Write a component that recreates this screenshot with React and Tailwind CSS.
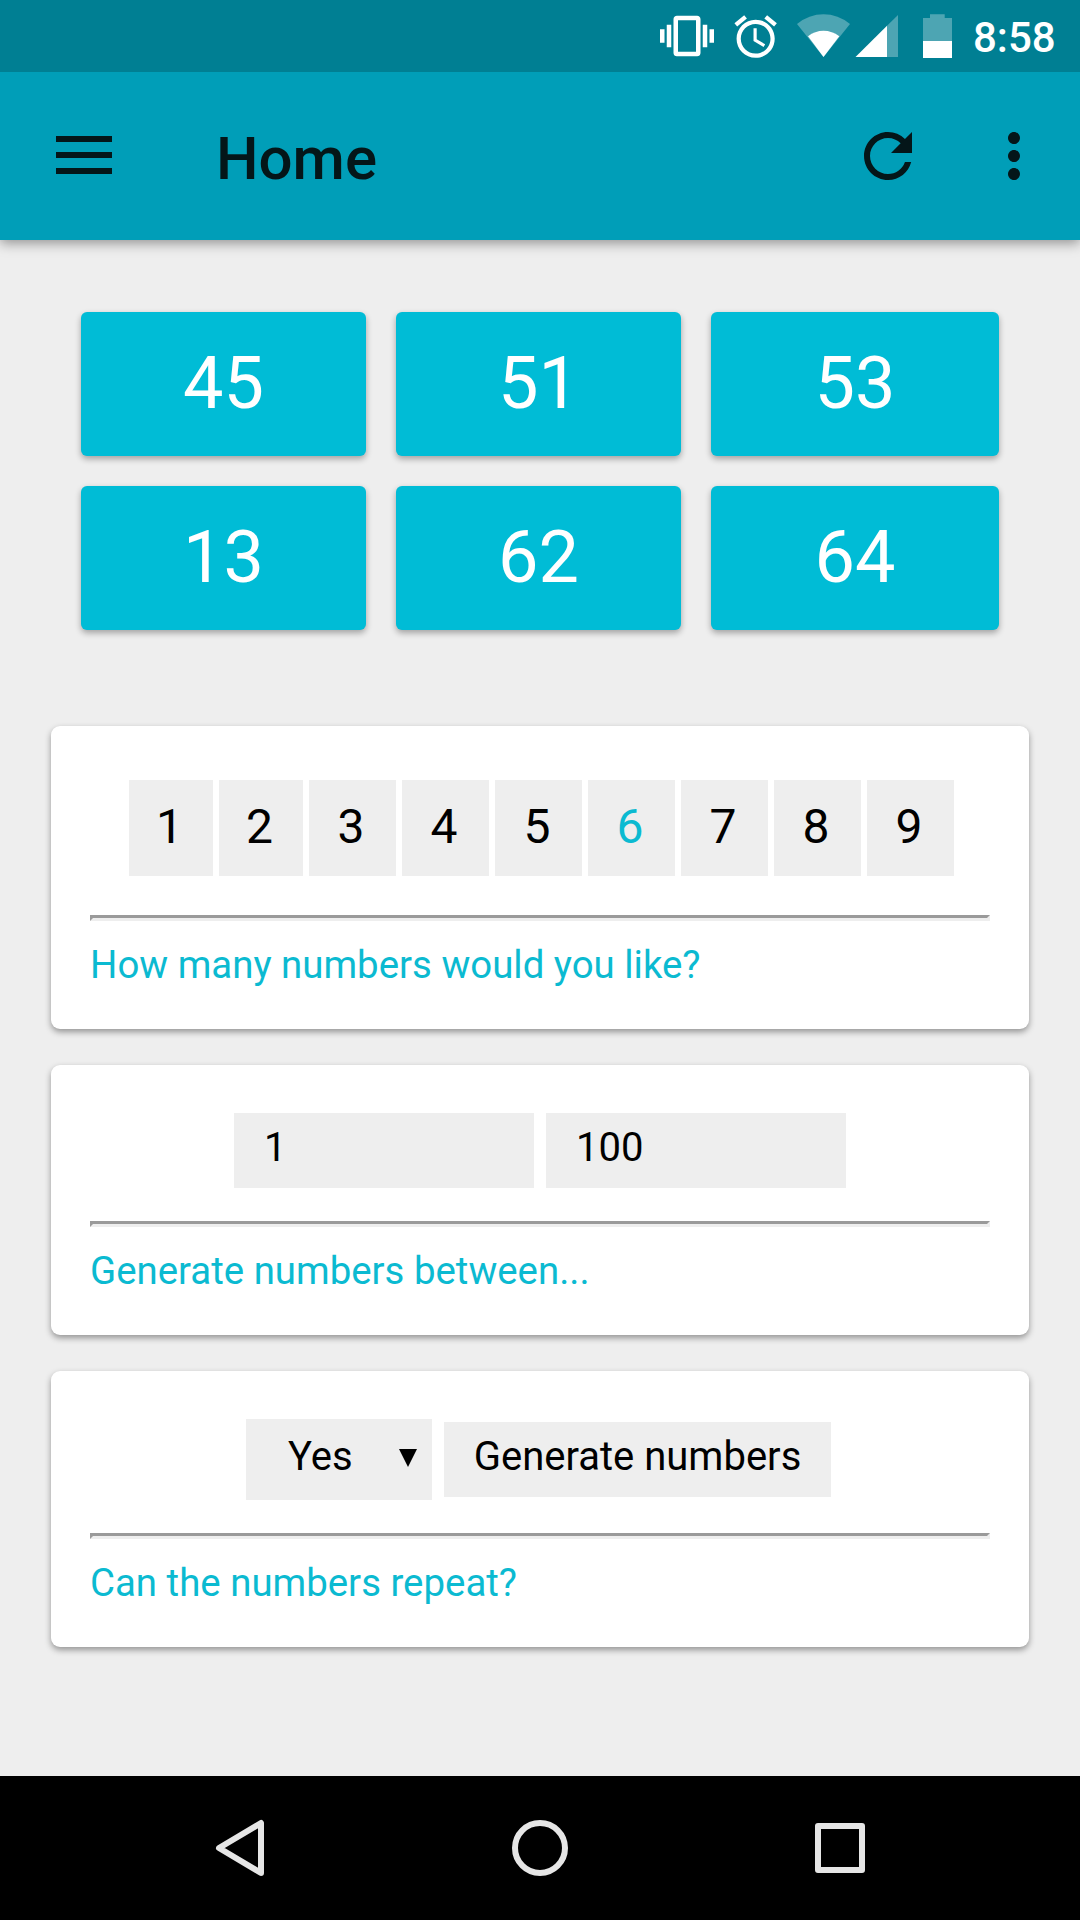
import { useState } from 'react';
import { MdRefresh, MdMoreVert } from 'react-icons/md';

const RESULTS = [45, 51, 53, 13, 62, 64];
const COUNTS = [1, 2, 3, 4, 5, 6, 7, 8, 9];

function StatusBar() {
  return (
    <div className="relative z-20 h-[72px] bg-[#007f93] flex items-center justify-end pr-[25px] text-white">
      {/* Vibrate, alarm, wifi, signal, battery */}
      <svg className="w-[300px] h-[72px] shrink-0" viewBox="655 0 300 72" fill="currentColor">
        <g transform="translate(660 9) scale(2.25)">
          <path d="M0 15h2V9H0v6zm3 2h2V7H3v10zm19-8v6h2V9h-2zm-3 8h2V7h-2v10zM16.5 3h-9C6.67 3 6 3.67 6 4.5v15c0 .83.67 1.5 1.5 1.5h9c.83 0 1.5-.67 1.5-1.5v-15c0-.83-.67-1.5-1.5-1.5zM16 19H8V5h8v14z" />
        </g>
        <g transform="translate(730.2 11.2) scale(2.12)">
          <path d="M22 5.72l-4.6-3.86-1.29 1.53 4.6 3.86L22 5.72zM7.88 3.39L6.6 1.86 2 5.71l1.29 1.53 4.59-3.85zM12.5 8H11v6l4.75 2.85.75-1.23-4-2.37V8zM12 4c-4.97 0-9 4.03-9 9s4.02 9 9 9c4.97 0 9-4.03 9-9s-4.03-9-9-9zm0 16c-3.87 0-7-3.13-7-7s3.13-7 7-7 7 3.13 7 7-3.13 7-7 7z" />
        </g>
        <path opacity=".3" d="M823.5 57L797 24Q809 14.3 823.5 14.3T850 24z" />
        <path d="M823.5 57L808 36.3Q815 30.8 823.5 30.8T839.3 36.3z" />
        <path opacity=".3" d="M887 25.7L898 15V57H887z" />
        <path d="M855.5 57L887 25.7V57z" />
        <path opacity=".3" d="M923 41V18H930V14.3H944.7V18H952V41z" />
        <path d="M923 41H952V58H923z" />
      </svg>
      <span className="w-[82px] ml-[18px] pt-[3px] text-[42px] leading-none font-medium whitespace-nowrap">8:58</span>
    </div>
  );
}

function AppBar() {
  return (
    <header className="relative z-10 h-[168px] bg-[#009eb8] flex items-center pl-14 pr-[30px] text-[#041619] shadow-[0_3px_12px_rgba(0,0,0,0.4)]">
      <button className="w-14 pb-0.5 flex flex-col gap-2.5">
        <span className="h-1.5 w-full bg-current" />
        <span className="h-1.5 w-full bg-current" />
        <span className="h-1.5 w-full bg-current" />
      </button>
      <h1 className="ml-[104px] pt-[5px] text-[60px] leading-none font-medium">Home</h1>
      <button className="ml-auto">
        <MdRefresh className="w-[72px] h-[72px]" />
      </button>
      <button className="ml-[54px]">
        <MdMoreVert className="w-[72px] h-[72px]" />
      </button>
    </header>
  );
}

function Card({ label, className, children }) {
  return (
    <section className={`bg-white rounded-[9px] px-[39px] shadow-[0_3px_6px_rgba(0,0,0,0.38)] ${className}`}>
      {children}
      <hr className="border-[3px] border-t-[#9a9a9a] border-l-[#9a9a9a] border-b-[#eeeeee] border-r-[#eeeeee]" />
      <p className="mt-[22px] text-[38.4px] leading-[44px] text-[#0bbad1]">{label}</p>
    </section>
  );
}

export default function App() {
  const [count, setCount] = useState(6);
  const [min, setMin] = useState('1');
  const [max, setMax] = useState('100');

  return (
    <div className="w-[1080px] h-[1920px] flex flex-col overflow-hidden bg-[#eeeeee] font-[Roboto,sans-serif] text-black">
      <StatusBar />
      <AppBar />

      <main className="flex-1 px-[51px] pt-[72px]">
        {/* Results */}
        <div className="grid grid-cols-[285px_285px_288px] gap-[30px] px-[30px]">
          {RESULTS.map((value) => (
            <div
              key={value}
              className="h-36 rounded-md bg-[#00bcd6] text-center text-[72px] leading-[143px] text-white shadow-[0_3px_6px_rgba(0,0,0,0.32)]"
            >
              {value}
            </div>
          ))}
        </div>

        <div className="mt-24 flex flex-col gap-9">
          <Card label="How many numbers would you like?" className="h-[303px] pt-[54px]">
            <div className="flex gap-1.5 pl-[39px] mb-[39px]">
              {COUNTS.map((n) => (
                <button
                  key={n}
                  onClick={() => setCount(n)}
                  className={`h-24 pb-[3px] pr-[3px] bg-[#eeeeee] text-5xl ${n < 3 ? 'w-[84px]' : 'w-[87px]'} ${n === count ? 'text-[#0bbad1]' : ''}`}
                >
                  {n}
                </button>
              ))}
            </div>
          </Card>

          <Card label="Generate numbers between..." className="h-[270px] pt-12">
            <div className="flex justify-center gap-3 mb-[33px]">
              <input
                value={min}
                onChange={(e) => setMin(e.target.value)}
                className="w-[300px] h-[75px] px-[30px] pb-1.5 bg-[#eeeeee] text-[40px] outline-none"
              />
              <input
                value={max}
                onChange={(e) => setMax(e.target.value)}
                className="w-[300px] h-[75px] px-[30px] pb-1.5 bg-[#eeeeee] text-[40px] outline-none"
              />
            </div>
          </Card>

          <Card label="Can the numbers repeat?" className="h-[276px] pt-12">
            <div className="flex items-center gap-3 pl-[156px] mb-[33px]">
              <button className="w-[186px] h-[81px] flex items-center justify-between pl-[42px] pr-[15px] bg-[#eeeeee] text-[40px]">
                <span className="pb-1.5">Yes</span>
                <svg className="w-[18px] h-[18px] mb-[3px]" viewBox="0 0 18 18">
                  <path d="M0 0H18L9 18z" fill="currentColor" />
                </svg>
              </button>
              <button className="w-[387px] h-[75px] pb-1.5 bg-[#eeeeee] text-[40px] whitespace-nowrap">
                Generate numbers
              </button>
            </div>
          </Card>
        </div>
      </main>

      {/* Navigation bar */}
      <nav className="h-36 bg-black flex items-center justify-between px-[210px] text-[#e6e6e6]">
        <svg className="w-[60px] h-[60px]" viewBox="0 0 60 60" fill="none" stroke="currentColor" strokeWidth="6" strokeLinejoin="round">
          <path d="M9 30L51 5V55z" />
        </svg>
        <svg className="w-[60px] h-[60px]" viewBox="0 0 60 60" fill="none" stroke="currentColor" strokeWidth="6">
          <circle cx="30" cy="30" r="25" />
        </svg>
        <svg className="w-[60px] h-[60px]" viewBox="0 0 60 60" fill="none" stroke="currentColor" strokeWidth="6" strokeLinejoin="round">
          <path d="M8 8H52V52H8z" />
        </svg>
      </nav>
    </div>
  );
}
